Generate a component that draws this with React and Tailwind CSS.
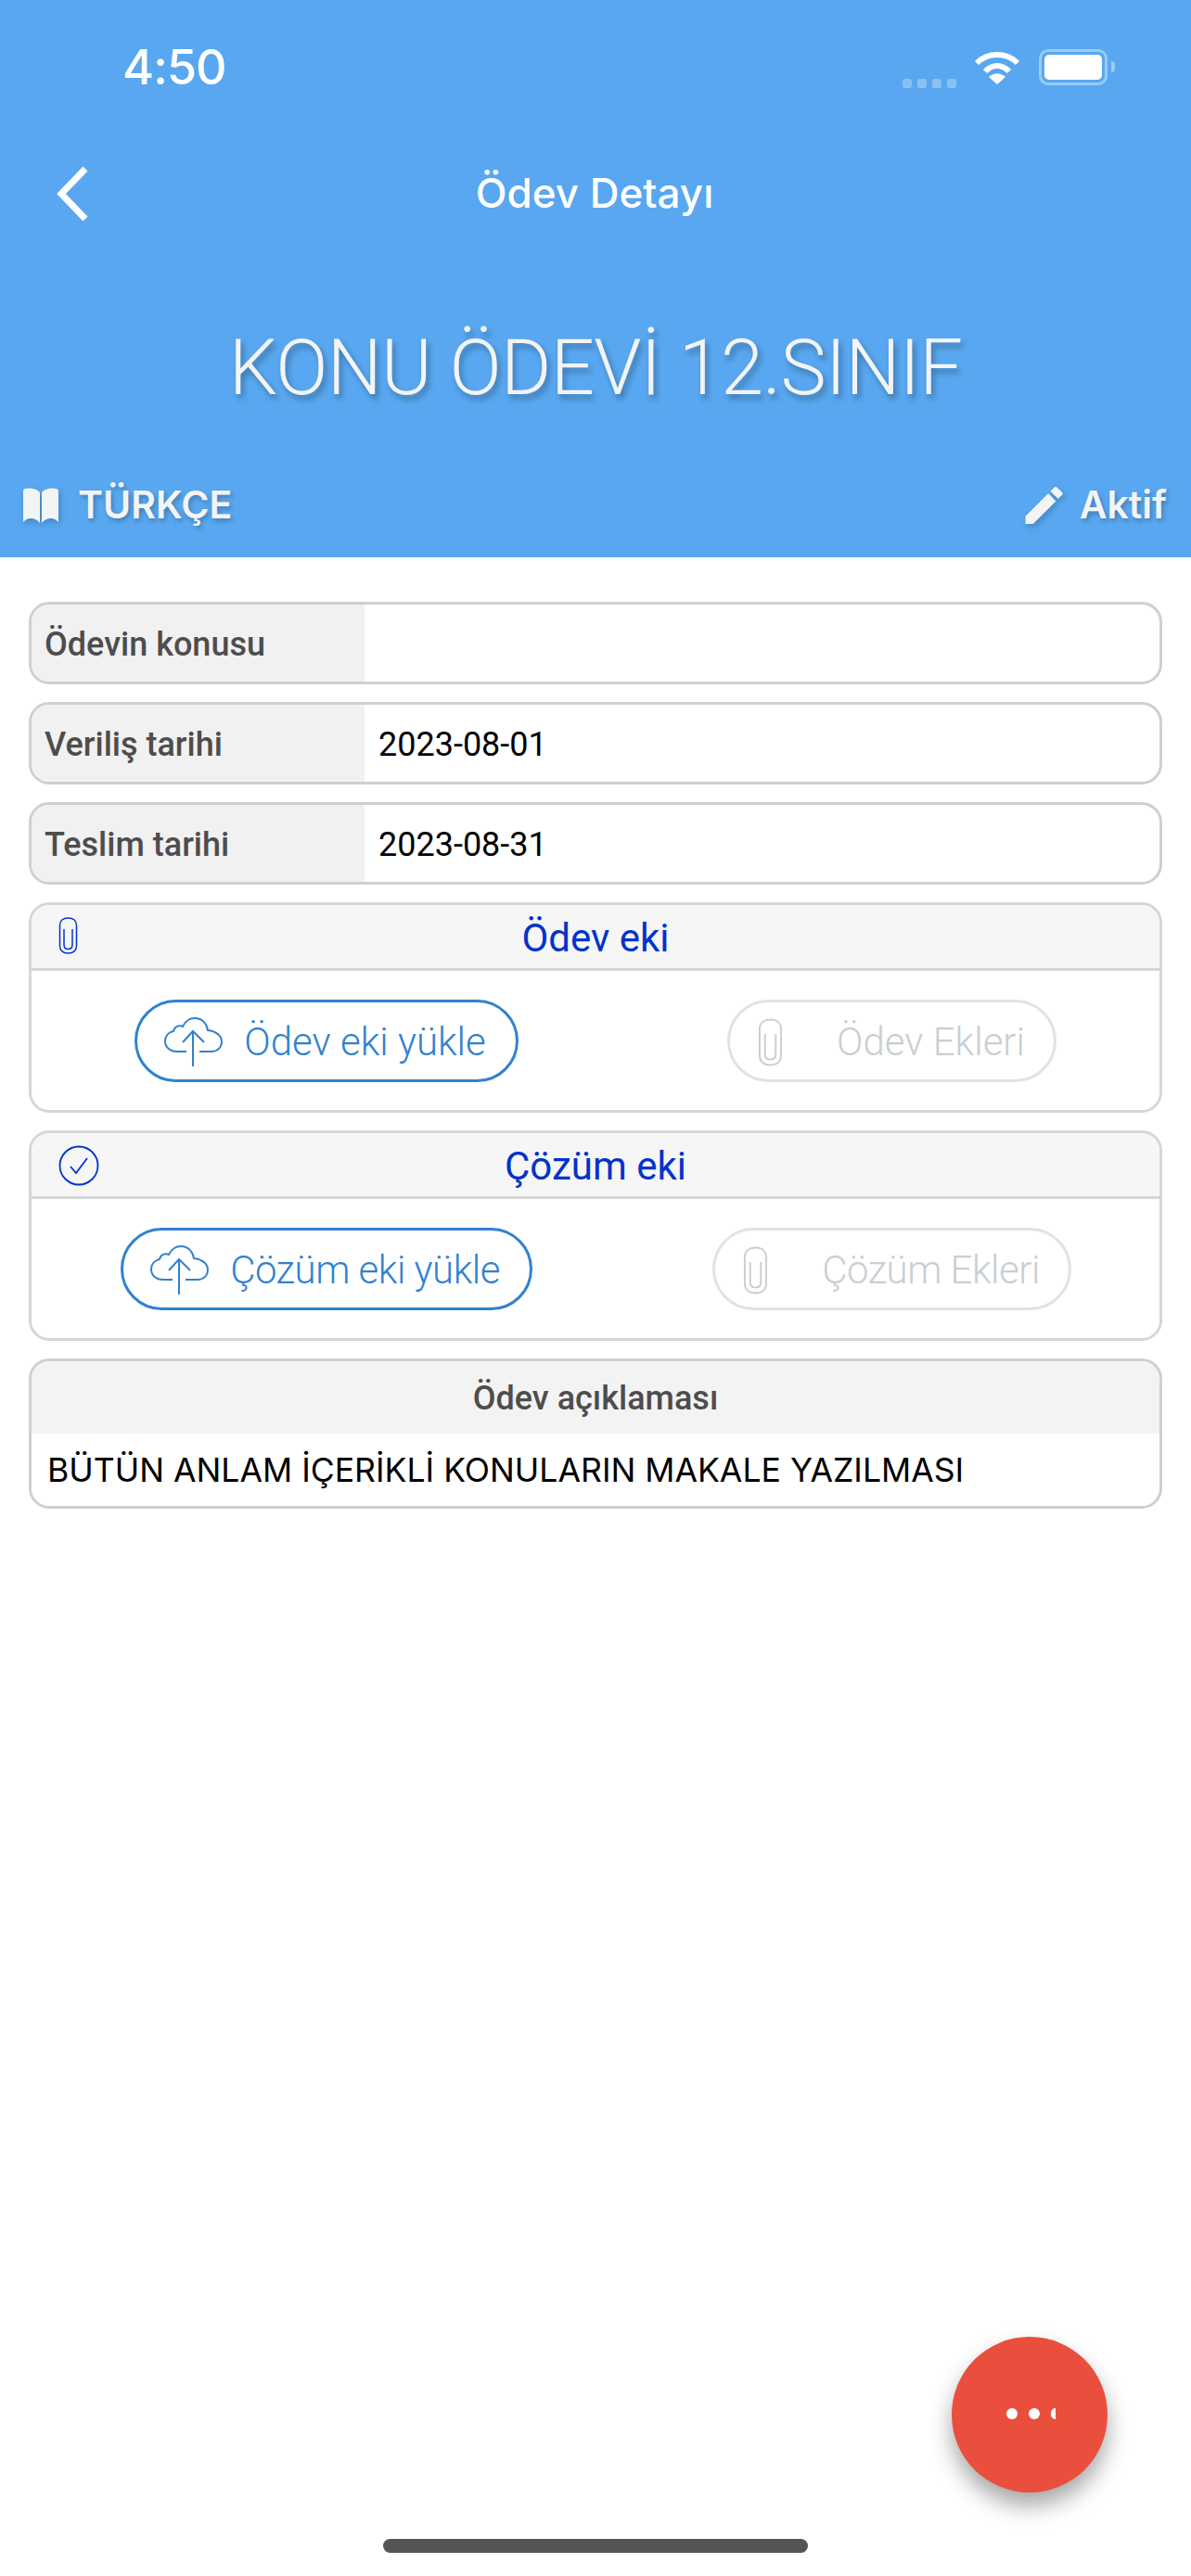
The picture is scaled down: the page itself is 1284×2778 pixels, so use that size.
function Clip({ className }) {
  return (
    <svg viewBox="0 0 21 40" fill="none" stroke="currentColor" strokeWidth="1.5" className={className}>
      <path d="M10.5 1 C5 1 1.5 4 1.5 9 V31 C1.5 36 5 39 10.5 39 C16 39 19.5 36 19.5 31 V9 C19.5 4 16 1 10.5 1" />
      <path d="M6 13 V30 C6 33 8 34.5 10.5 34.5 C13 34.5 15 33 15 30 V13" />
    </svg>
  )
}

function Cloud() {
  return (
    <svg viewBox="0 0 63 54" fill="none" stroke="currentColor" strokeWidth="2" className="w-[63px] h-[54px] shrink-0">
      <path d="M24 37 H14 C6 37 1 32 1 26 C1 20 5 16 10 15 C11 10 16 8 20 10 C23 4 28 1 33 1 C41 1 46 7 47 14 C56 15 62 20 62 26 C62 33 57 37 51 37 H38" />
      <path d="M31 53 V15 M20 27 L31 15 L43 27" />
    </svg>
  )
}

function Row({ label, value, className }) {
  return (
    <div className={`flex h-[89px] border-[3px] border-[#cfcfcf] rounded-[22px] overflow-hidden ${className}`}>
      <div className="w-[359px] bg-[#f1f1f1] flex items-center pl-[14px] pt-[3px] text-[36px] font-medium text-[#4d4d4d]">{label}</div>
      <div className="flex-1 flex items-center pl-[15px] pt-[2px] text-[36px] text-black">{value}</div>
    </div>
  )
}

function AttachCard({ title, icon, upload, list, tracking, className }) {
  return (
    <div className={`border-[3px] border-[#d6d6d6] rounded-[22px] overflow-hidden ${className}`}>
      <div className="relative h-[71px] pt-[2px] bg-[#f6f6f6] border-b-[3px] border-[#d6d6d6] flex items-center justify-center text-[42px] text-[#0033cc]">
        <span className="absolute left-[29px] top-[13px]">{icon}</span>
        {title}
      </div>
      <div className="flex pt-[31px] pl-[14px] h-[150px]">
        <div className="w-[608px] shrink-0 flex justify-center">
          <div className={`h-[89px] pt-[2px] border-[3px] border-[#3182ce] rounded-full flex items-center pl-[29px] pr-[32px] gap-[23px] text-[#3182ce] text-[42px] font-light ${tracking}`}>
            <Cloud />
            {upload}
          </div>
        </div>
        <div className="w-[608px] shrink-0 pl-[3px] flex justify-center">
          <div className={`h-[89px] pt-[2px] border-[3px] border-[#e0e3e6] rounded-full flex items-center pl-[30px] pr-[31px] gap-[58px] text-[#c9ced3] text-[42px] font-light ${tracking}`}>
            <Clip className="w-[27px] h-[54px] shrink-0" />
            {list}
          </div>
        </div>
      </div>
    </div>
  )
}

export default function App() {
  return (
    <div className="relative w-[1284px] h-[2778px] bg-white overflow-hidden font-['Roboto',sans-serif]">
      <header className="h-[601px] bg-[#58a7f0] text-white">
        {/* status bar */}
        <div className="h-[144px] flex items-center pl-[132px] pr-[82px]">
          <span className="mt-[2px] text-[52px] font-medium font-['Inter',sans-serif] tracking-[-1px]">4:50</span>
          <div className="ml-auto flex items-center">
            <div className="flex gap-[6px] mt-[36px] opacity-30">
              <div className="w-[10px] h-[10px] rounded-[3px] bg-white" />
              <div className="w-[10px] h-[10px] rounded-[3px] bg-white" />
              <div className="w-[10px] h-[10px] rounded-[3px] bg-white" />
              <div className="w-[10px] h-[10px] rounded-[3px] bg-white" />
            </div>
            <svg viewBox="0 0 50 37" className="w-[50px] h-[37px] ml-[19px]" fill="none" stroke="white" strokeWidth="6">
              <path d="M3 14 C15 2 35 2 47 14" />
              <path d="M12 23 C20 15 30 15 38 23" />
              <path d="M25 37 L16 29 C22 24 28 24 34 29 Z" fill="white" stroke="none" />
            </svg>
            <div className="ml-[20px] w-[74px] h-[39px] border-[3px] border-white/40 rounded-[10px] p-[3px]">
              <div className="w-full h-full bg-white rounded-[5px]" />
            </div>
            <div className="ml-[4px] w-[4px] h-[12px] bg-white/40 rounded-r-full" />
          </div>
        </div>

        {/* nav */}
        <div className="relative h-[128px] flex items-center justify-center">
          <svg viewBox="0 0 36 60" className="absolute left-[60px] top-[35px] w-[36px] h-[60px]" fill="none" stroke="white" strokeWidth="7">
            <path d="M32 3 L6 30 L32 57" />
          </svg>
          <span className="text-[44px] font-medium font-['Inter',sans-serif] pr-[2px]">Ödev Detayı</span>
        </div>

        {/* title */}
        <div className="h-[250px] flex items-center justify-center text-[83px] font-light text-[#f3f4f6] tracking-[-0.7px] [text-shadow:3px_5px_6px_rgba(0,0,0,0.3)]">
          KONU ÖDEVİ 12.SINIF
        </div>

        {/* subject + status */}
        <div className="-mt-[8px] flex items-start justify-between pl-[24px] pr-[26px] text-[41px] font-semibold font-['Inter',sans-serif] text-[#f3f4f6] [text-shadow:2px_3px_5px_rgba(0,0,0,0.25)]">
          <div className="flex items-center gap-[20px]">
            <svg viewBox="0 0 40 40" className="w-[40px] h-[40px] fill-[#f3f4f6] drop-shadow-[2px_3px_3px_rgba(0,0,0,0.2)]">
              <path d="M19 6 C16 2 8 0.5 3 2 C1.5 2.5 1 3.5 1 5 V38 C6 32 14 33 19 39 Z" />
              <path d="M21 6 C24 2 32 0.5 37 2 C38.5 2.5 39 3.5 39 5 V38 C34 32 26 33 21 39 Z" />
            </svg>
            TÜRKÇE
          </div>
          <div className="flex items-center gap-[18px]">
            <svg viewBox="3 3 18 18" className="w-[41px] h-[40px] fill-[#f3f4f6] drop-shadow-[2px_3px_3px_rgba(0,0,0,0.2)]">
              <path d="M3 17.25V21h3.75L17.81 9.94l-3.75-3.75L3 17.25zM20.71 7.04c.39-.39.39-1.02 0-1.41l-2.34-2.34c-.39-.39-1.02-.39-1.41 0l-1.83 1.83 3.75 3.75 1.83-1.83z" />
            </svg>
            Aktif
          </div>
        </div>
      </header>

      <main className="px-[31px] pt-[48px] flex flex-col">
        <Row label="Ödevin konusu" value="" />
        <Row label="Veriliş tarihi" value="2023-08-01" className="mt-[19px]" />
        <Row label="Teslim tarihi" value="2023-08-31" className="mt-[19px]" />
        <AttachCard
          className="mt-[19px]"
          title="Ödev eki"
          upload="Ödev eki yükle"
          list="Ödev Ekleri"
          tracking=""
          icon={<Clip className="w-[21px] h-[40px]" />}
        />
        <AttachCard
          className="mt-[19px]"
          title="Çözüm eki"
          upload="Çözüm eki yükle"
          list="Çözüm Ekleri"
          tracking="tracking-[-0.5px]"
          icon={
            <svg viewBox="0 0 44 44" className="w-[44px] h-[44px]" fill="none" stroke="currentColor" strokeWidth="1.8">
              <circle cx="22" cy="22" r="20.5" />
              <path d="M13 23 L19 30 L31 14" />
            </svg>
          }
        />
        <div className="mt-[19px] border-[3px] border-[#cfcfcf] rounded-[22px] overflow-hidden">
          <div className="h-[78px] pt-[2px] bg-[#f3f3f3] flex items-center justify-center text-[36px] font-medium text-[#4d4d4d]">Ödev açıklaması</div>
          <div className="h-[78px] pt-[2px] flex items-center pl-[17px] text-[35.6px] text-black font-['Inter',sans-serif]">BÜTÜN ANLAM İÇERİKLİ KONULARIN MAKALE YAZILMASI</div>
        </div>
      </main>

      {/* fab */}
      <div className="absolute left-[1026px] top-[2520px] w-[168px] h-[168px] rounded-full bg-[#ea4f3d] shadow-[0_14px_24px_rgba(0,0,0,0.35)] flex items-center pl-[59px] pb-[2px] gap-[12px]">
        <div className="w-[12px] h-[12px] rounded-full bg-white" />
        <div className="w-[12px] h-[12px] rounded-full bg-white" />
        <div className="w-[5px] h-[12px] rounded-l-full bg-white" />
      </div>

      {/* home indicator */}
      <div className="absolute left-[413px] top-[2738px] w-[458px] h-[15px] rounded-full bg-[#555555]" />
    </div>
  )
}
